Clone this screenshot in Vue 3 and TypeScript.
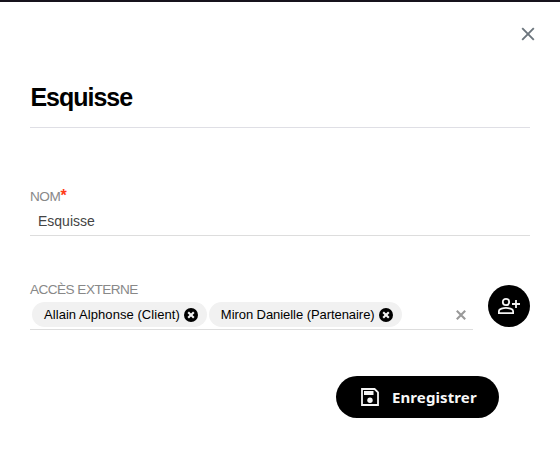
<script setup lang="ts">
import { ref } from 'vue'

interface Access {
  id: number
  label: string
  spacing: number
}

const name = ref('Esquisse')
const accesses = ref<Access[]>([
  { id: 1, label: 'Allain Alphonse (Client)', spacing: 0.06 },
  { id: 2, label: 'Miron Danielle (Partenaire)', spacing: -0.06 },
])

function removeAccess(id: number) {
  accesses.value = accesses.value.filter((a) => a.id !== id)
}

function clearAll() {
  accesses.value = []
}
</script>

<template>
  <main class="modal">
    <header class="top">
      <button class="close" type="button">
        <svg width="14" height="14" viewBox="0 0 14 14"><path d="M1.2 1.2 12.8 12.8M12.8 1.2 1.2 12.8" stroke="#6c757d" stroke-width="1.9" /></svg>
      </button>
    </header>
    <h1 class="title">Esquisse</h1>

    <label class="field">
      <span class="label">NOM<span class="required">*</span></span>
      <input v-model="name" class="input" type="text" />
    </label>

    <div class="row">
      <div class="access">
        <span class="label">ACCÈS EXTERNE</span>
        <div class="select">
          <span v-for="a in accesses" :key="a.id" class="chip">
            <span class="chip-text" :style="{ letterSpacing: a.spacing + 'px' }">{{ a.label }}</span>
            <svg class="chip-remove" width="14" height="14" viewBox="0 0 14 14" @click="removeAccess(a.id)">
              <circle cx="7" cy="7" r="7" fill="#000" />
              <path d="M4.2 4.2 9.8 9.8M9.8 4.2 4.2 9.8" stroke="#f1f1f1" stroke-width="2.1" />
            </svg>
          </span>
          <svg class="clear" width="10" height="10" viewBox="0 0 10 10" @click="clearAll">
            <path d="M.8.8 9.2 9.2M9.2.8.8 9.2" stroke="#999" stroke-width="2.1" />
          </svg>
        </div>
      </div>
      <button class="add" type="button">
        <svg width="24" height="18" viewBox="0 0 24 18" fill="none" stroke="#f4f4f4" stroke-width="1.8">
          <circle cx="9" cy="5" r="3.2" />
          <path d="M1.9 16.1V14c0-2 4.7-3.1 7.1-3.1s7.1 1.1 7.1 3.1v2.1z" />
          <path d="M19 3v8M15 7h8" />
        </svg>
      </button>
    </div>

    <footer class="footer">
      <button class="save" type="button">
        <svg width="18" height="18" viewBox="0 0 18 18">
          <path d="M1 1h12.6L17 4.4V17H1z" fill="none" stroke="#f4f4f4" stroke-width="1.8" />
          <path d="M3 3h9.5v4H3z" fill="#f4f4f4" />
          <circle cx="9" cy="12.2" r="2.7" fill="#f4f4f4" />
        </svg>
        <span>Enregistrer</span>
      </button>
    </footer>
  </main>
</template>

<style>
body {
  background: #fff;
}
</style>

<style scoped>
.modal {
  box-sizing: border-box;
  height: 459px;
  padding: 0 30px;
  border-top: 2px solid #16131c;
  font-family: 'Liberation Sans', Arial, sans-serif;
  background: #fff;
}
button {
  padding: 0;
  border: 0;
  cursor: pointer;
}
.top {
  display: flex;
  justify-content: flex-end;
  height: 79px;
  margin-right: -5px;
}
.close {
  display: flex;
  width: 14px;
  height: 14px;
  margin-top: 25px;
  background: none;
}
.title {
  box-sizing: border-box;
  height: 47px;
  margin: 0;
  border-bottom: 1px solid #dfdfe5;
  font-size: 25px;
  line-height: 32px;
  letter-spacing: -1px;
  text-indent: 0.4px;
  color: #000;
}
.field {
  display: flex;
  flex-direction: column;
  margin-top: 60px;
}
.label {
  display: block;
  height: 16px;
  font-size: 13.6px;
  line-height: 18px;
  letter-spacing: -0.54px;
  color: #888;
}
.field .label {
  letter-spacing: -0.45px;
}
.required {
  font-size: 16px;
  font-weight: bold;
  line-height: 0;
  color: #ff3b19;
}
.input {
  box-sizing: border-box;
  height: 32px;
  padding: 2px 8px 0;
  border: 0;
  border-bottom: 1px solid #ddd;
  outline: 0;
  font: 14px 'Liberation Sans', Arial, sans-serif;
  color: #444;
  background: transparent;
}
.row {
  display: flex;
  gap: 15px;
  height: 49px;
  margin-top: 45px;
}
.access {
  flex: 1;
}
.select {
  box-sizing: border-box;
  display: flex;
  align-items: center;
  gap: 2px;
  height: 33px;
  padding: 2px 7px 0 2px;
  border-bottom: 1px solid #ddd;
}
.chip {
  box-sizing: border-box;
  display: flex;
  align-items: center;
  gap: 4px;
  height: 25px;
  padding: 0 9px 0 12px;
  border-radius: 13px;
  background: #f1f1f1;
}
.chip-text {
  font-size: 13px;
  line-height: 25px;
  color: #000;
}
.chip-remove {
  margin-top: 1px;
}
.clear {
  margin: 1px 0 0 auto;
}
.add {
  display: flex;
  align-items: center;
  justify-content: center;
  width: 42px;
  height: 42px;
  margin-top: 4px;
  border-radius: 50%;
  background: #000;
}
.footer {
  display: flex;
  justify-content: flex-end;
  margin: 46px 31px 0 0;
}
.save {
  display: flex;
  align-items: center;
  gap: 13px;
  width: 163px;
  height: 42px;
  padding-left: 25px;
  border-radius: 21px;
  font: bold 15px 'Noto Sans', sans-serif;
  letter-spacing: 0.1px;
  color: #f8f8f8;
  background: #000;
}
</style>
